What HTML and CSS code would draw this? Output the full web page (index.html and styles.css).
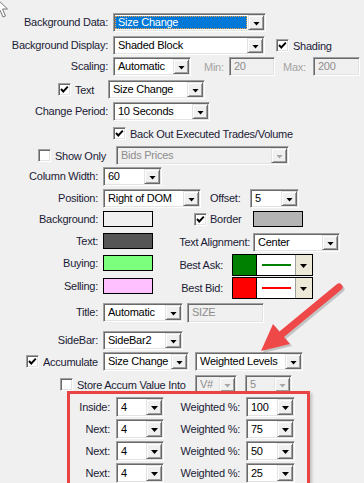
FILE: index.html
```html
<!DOCTYPE html>
<html lang="en">
<head>
  <meta charset="UTF-8" />
  <title>Column Settings</title>
  <link rel="stylesheet" href="styles.css">
</head>
<body>
  <div class="dlg">
    <div class="row">
      <span class="lbl l1">Background Data:</span>
      <div class="combo focus w153"><span class="val">Size Change</span><span class="dd"></span></div>
    </div>
    <div class="row mt4">
      <span class="lbl l1">Background Display:</span>
      <div class="combo w152"><span class="val">Shaded Block</span><span class="dd"></span></div>
      <span class="chk on ml11"><svg viewBox="0 0 11 11"><polyline points="2,5 4.3,7.5 8.8,2.6"/></svg></span>
      <span class="txt ml4">Shading</span>
    </div>
    <div class="row mt2">
      <span class="lbl l1">Scaling:</span>
      <div class="combo w78"><span class="val">Automatic</span><span class="dd"></span></div>
      <span class="gl ml13 w25">Min:</span>
      <div class="tb w46">20</div>
      <span class="gl ml8 w30">Max:</span>
      <div class="tb w47">200</div>
    </div>
    <div class="row mt4">
      <div class="ckl w108 pl58">
        <span class="chk on"><svg viewBox="0 0 11 11"><polyline points="2,5 4.3,7.5 8.8,2.6"/></svg></span>
        <span class="txt ml4">Text</span>
      </div>
      <div class="combo w97"><span class="val">Size Change</span><span class="dd"></span></div>
    </div>
    <div class="row mt3">
      <span class="lbl l1">Change Period:</span>
      <div class="combo w97"><span class="val">10 Seconds</span><span class="dd"></span></div>
    </div>
    <div class="row mt3">
      <div class="ckl pl113">
        <span class="chk on"><svg viewBox="0 0 11 11"><polyline points="2,5 4.3,7.5 8.8,2.6"/></svg></span>
        <span class="txt ml4">Back Out Executed Trades/Volume</span>
      </div>
    </div>
    <div class="row mt3">
      <div class="ckl w116 pl38">
        <span class="chk"></span>
        <span class="txt ml4">Show Only</span>
      </div>
      <div class="combo dis w173"><span class="val">Bids Prices</span><span class="dd"></span></div>
    </div>
    <div class="row mt2">
      <span class="lbl l2">Column Width:</span>
      <div class="combo w59"><span class="val">60</span><span class="dd"></span></div>
    </div>
    <div class="row mt3">
      <span class="lbl l2">Position:</span>
      <div class="combo w98"><span class="val">Right of DOM</span><span class="dd"></span></div>
      <span class="lbl left ml9 w40">Offset:</span>
      <div class="combo w49"><span class="val">5</span><span class="dd"></span></div>
    </div>
    <div class="row h16 mt3">
      <span class="lbl l2">Background:</span>
      <span class="swatch c-bg"></span>
      <span class="chk on ml41"><svg viewBox="0 0 11 11"><polyline points="2,5 4.3,7.5 8.8,2.6"/></svg></span>
      <span class="txt ml3 w43">Border</span>
      <span class="swatch c-border"></span>
    </div>
    <div class="row top h19 mt6">
      <span class="lbl l2 lh16">Text:</span>
      <span class="swatch c-text"></span>
      <span class="lbl w97 mr3">Text Alignment:</span>
      <div class="combo w87"><span class="val">Center</span><span class="dd"></span></div>
    </div>
    <div class="row top h22 mt2">
      <span class="lbl l2 lh16 mt1">Buying:</span>
      <span class="swatch c-buy mt1"></span>
      <span class="lbl w70 mr9 lh22">Best Ask:</span>
      <div class="ccombo"><span class="c c-ask"></span><span class="ln ln-ask"></span><span class="dd2"></span></div>
    </div>
    <div class="row top h22 mt1">
      <span class="lbl l2 lh16 mt1">Selling:</span>
      <span class="swatch c-sell mt1"></span>
      <span class="lbl w70 mr9 lh22">Best Bid:</span>
      <div class="ccombo"><span class="c c-bid"></span><span class="ln ln-bid"></span><span class="dd2"></span></div>
    </div>
    <div class="row mt4">
      <span class="lbl l2">Title:</span>
      <div class="combo w80"><span class="val">Automatic</span><span class="dd"></span></div>
      <div class="tb w77 h20 ml4">SIZE</div>
    </div>
    <div class="row mt9">
      <span class="lbl l2">SideBar:</span>
      <div class="combo w80"><span class="val">SideBar2</span><span class="dd"></span></div>
    </div>
    <div class="row mt2">
      <div class="ckl w103 pl26">
        <span class="chk on"><svg viewBox="0 0 11 11"><polyline points="2,5 4.3,7.5 8.8,2.6"/></svg></span>
        <span class="txt ml4">Accumulate</span>
      </div>
      <div class="combo w86"><span class="val">Size Change</span><span class="dd"></span></div>
      <div class="combo w108 ml6"><span class="val">Weighted Levels</span><span class="dd"></span></div>
    </div>
    <div class="row mt4">
      <div class="ckl w195 pl60">
        <span class="chk"></span>
        <span class="txt ml4">Store Accum Value Into</span>
      </div>
      <div class="combo dis w42"><span class="val">V#</span><span class="dd"></span></div>
      <div class="combo dis w47 ml8"><span class="val">5</span><span class="dd"></span></div>
    </div>
    <div class="row h20 mt3">
      <span class="lbl l3">Inside:</span>
      <div class="combo h20 w48"><span class="val">4</span><span class="dd"></span></div>
      <span class="lbl w76 mr6">Weighted %:</span>
      <div class="combo h20 w49"><span class="val">100</span><span class="dd"></span></div>
    </div>
    <div class="row h20 mt2">
      <span class="lbl l3">Next:</span>
      <div class="combo h20 w48"><span class="val">4</span><span class="dd"></span></div>
      <span class="lbl w76 mr6">Weighted %:</span>
      <div class="combo h20 w49"><span class="val">75</span><span class="dd"></span></div>
    </div>
    <div class="row h20 mt2">
      <span class="lbl l3">Next:</span>
      <div class="combo h20 w48"><span class="val">4</span><span class="dd"></span></div>
      <span class="lbl w76 mr6">Weighted %:</span>
      <div class="combo h20 w49"><span class="val">50</span><span class="dd"></span></div>
    </div>
    <div class="row h20 mt2">
      <span class="lbl l3">Next:</span>
      <div class="combo h20 w48"><span class="val">4</span><span class="dd"></span></div>
      <span class="lbl w76 mr6">Weighted %:</span>
      <div class="combo h20 w49"><span class="val">25</span><span class="dd"></span></div>
    </div>
  </div>

  <!-- annotation drawn over the dialog -->
  <div class="callout"></div>
  <svg class="arrow" viewBox="0 0 364 483">
    <g class="shadow">
      <line x1="341" y1="289" x2="284" y2="336" />
      <polygon points="263,353 275,326 292,346" />
    </g>
    <g class="red">
      <line x1="339" y1="287" x2="282" y2="334" />
      <polygon points="261,351 273,324 290,344" />
    </g>
  </svg>
  <svg class="cursor" viewBox="0 0 20 24">
    <polygon points="-4,-2 -4,14 0,10 3,17 5.5,16 2.5,9 7.5,9" />
  </svg>
</body>
</html>
```

FILE: styles.css
```css
body {
  margin: 0;
  width: 364px;
  height: 483px;
  overflow: hidden;
  position: relative;
  background: #f0f0f0;
  font-family: "Liberation Sans", Arial, sans-serif;
  font-size: 11px;
  letter-spacing: -0.25px;
  color: #000;
}
.dlg {
  padding-top: 13px;
}
.row {
  display: flex;
  align-items: center;
  height: 19px;
}
.row.top {
  align-items: flex-start;
}
.lbl {
  flex: none;
  text-align: right;
  white-space: nowrap;
  color: #1b1b36;
  line-height: 19px;
}
.lbl.left {
  text-align: left;
}
.txt {
  flex: none;
  white-space: nowrap;
  color: #1b1b36;
}
.gl {
  flex: none;
  color: #a3a3a3;
}
.l1 { width: 108px; margin-right: 5px; }
.l2 { width: 98px; margin-right: 5px; }
.l3 { width: 110px; margin-right: 6px; }

/* combo boxes */
.combo {
  flex: none;
  display: flex;
  height: 19px;
  box-sizing: border-box;
  padding: 1px;
  background: #fff;
  border: 1px solid;
  border-color: #a0a0a0 #fff #fff #a0a0a0;
  box-shadow: inset 1px 1px #696969, inset -1px -1px #e3e3e3;
}
.combo .val {
  flex: 1;
  padding-left: 3px;
  overflow: hidden;
  white-space: nowrap;
  line-height: 15px;
}
.combo.h20 .val { line-height: 16px; }
.combo .dd {
  flex: none;
  position: relative;
  width: 16px;
  box-sizing: border-box;
  background: #f0f0f0;
  border: 1px solid;
  border-color: #e3e3e3 #696969 #696969 #e3e3e3;
  box-shadow: inset 1px 1px #fff, inset -1px -1px #a0a0a0;
}
.combo .dd::after {
  content: "";
  position: absolute;
  left: 4px;
  top: 50%;
  margin-top: -1px;
  width: 7px;
  height: 4px;
  background: #000;
  clip-path: polygon(0 0, 100% 0, 50% 100%);
}
.combo.focus .val {
  margin: 1px 1px 1px 0;
  padding-left: 2px;
  line-height: 11px;
  background: #0078d7;
  color: #fff;
  border: 1px dotted #f0a040;
}
.combo.dis {
  background: #f0f0f0;
}
.combo.dis .val {
  color: #8d8d8d;
}
.combo.dis .dd::after {
  background: #a6a6a6;
}

/* text boxes */
.tb {
  flex: none;
  height: 19px;
  box-sizing: border-box;
  padding-left: 4px;
  line-height: 17px;
  color: #8d8d8d;
  background: #f0f0f0;
  border: 1px solid;
  border-color: #a0a0a0 #fff #fff #a0a0a0;
  box-shadow: inset 1px 1px #696969, inset -1px -1px #e3e3e3;
}

/* check boxes */
.chk {
  flex: none;
  width: 13px;
  height: 13px;
  box-sizing: border-box;
  background: #fff;
  border: 1px solid;
  border-color: #a0a0a0 #fff #fff #a0a0a0;
  box-shadow: inset 1px 1px #696969, inset -1px -1px #e3e3e3;
}
.chk svg {
  display: block;
  width: 11px;
  height: 11px;
}
.chk polyline {
  fill: none;
  stroke: #000;
  stroke-width: 1.9;
}
.ckl {
  flex: none;
  display: flex;
  align-items: center;
  box-sizing: border-box;
}

/* colour swatches */
.swatch {
  flex: none;
  width: 50px;
  height: 16px;
  box-sizing: border-box;
  border: 1px solid #000;
}
.c-bg { background: #f0f0f0; }
.c-border { background: #b4b4b4; }
.c-text { background: #555555; }
.c-buy { background: #7cff7c; }
.c-sell { background: #ffc0ff; }

.ccombo {
  flex: none;
  display: flex;
  width: 81px;
  height: 22px;
  box-sizing: border-box;
  border: 1px solid #000;
  background: #fff;
}
.ccombo .c {
  width: 23px;
  border-right: 1px solid #000;
}
.c-ask { background: #008000; }
.c-bid { background: #ff0000; }
.ccombo .ln {
  flex: 1;
  position: relative;
}
.ccombo .ln::after {
  content: "";
  position: absolute;
  left: 5px;
  right: 4px;
  top: 9px;
  height: 2px;
}
.ln-ask::after { background: #008000; }
.ln-bid::after { background: #ff0000; }
.ccombo .dd2 {
  position: relative;
  width: 16px;
  background: #ece9d8;
  border-left: 1px solid #a0a0a0;
}
.ccombo .dd2::after {
  content: "";
  position: absolute;
  left: 4px;
  top: 9px;
  width: 7px;
  height: 4px;
  background: #000;
  clip-path: polygon(0 0, 100% 0, 50% 100%);
}

/* sizes and spacing */
.w25 { width: 25px; }
.w30 { width: 30px; }
.w40 { width: 40px; }
.w42 { width: 42px; }
.w43 { width: 43px; }
.w46 { width: 46px; }
.w47 { width: 47px; }
.w48 { width: 48px; }
.w49 { width: 49px; }
.w59 { width: 59px; }
.w70 { width: 70px; }
.w76 { width: 76px; }
.w77 { width: 77px; }
.w78 { width: 78px; }
.w80 { width: 80px; }
.w86 { width: 86px; }
.w87 { width: 87px; }
.w97 { width: 97px; }
.w98 { width: 98px; }
.w103 { width: 103px; }
.w108 { width: 108px; }
.w116 { width: 116px; }
.w152 { width: 152px; }
.w153 { width: 153px; }
.w173 { width: 173px; }
.w195 { width: 195px; }
.h16 { height: 16px; }
.h19 { height: 19px; }
.h20 { height: 20px; }
.h22 { height: 22px; }
.lh16 { line-height: 16px; }
.lh22 { line-height: 22px; }
.mt1 { margin-top: 1px; }
.mt2 { margin-top: 2px; }
.mt3 { margin-top: 3px; }
.mt4 { margin-top: 4px; }
.mt6 { margin-top: 6px; }
.mt9 { margin-top: 9px; }
.ml3 { margin-left: 3px; }
.ml4 { margin-left: 4px; }
.ml6 { margin-left: 6px; }
.ml8 { margin-left: 8px; }
.ml9 { margin-left: 9px; }
.ml11 { margin-left: 11px; }
.ml13 { margin-left: 13px; }
.ml41 { margin-left: 41px; }
.mr3 { margin-right: 3px; }
.mr6 { margin-right: 6px; }
.mr9 { margin-right: 9px; }
.pl26 { padding-left: 26px; }
.pl38 { padding-left: 38px; }
.pl58 { padding-left: 58px; }
.pl60 { padding-left: 60px; }
.pl113 { padding-left: 113px; }

/* overlays */
.callout {
  position: absolute;
  left: 67px;
  top: 391px;
  width: 243px;
  height: 110px;
  box-sizing: border-box;
  border: 3px solid #ea4343;
  box-shadow: 2px 2px 3px rgba(0, 0, 0, 0.2);
}
.arrow {
  position: absolute;
  left: 0;
  top: 0;
  width: 364px;
  height: 483px;
  pointer-events: none;
}
.arrow line {
  stroke-width: 7;
  stroke-linecap: round;
}
.arrow .red line { stroke: #ee4848; }
.arrow .red polygon { fill: #ee4848; }
.arrow .shadow { opacity: 0.18; }
.arrow .shadow line { stroke: #000; }
.arrow .shadow polygon { fill: #000; }
.cursor {
  position: absolute;
  left: 0;
  top: 0;
  width: 20px;
  height: 24px;
  overflow: visible;
}
.cursor polygon {
  fill: #fff;
  stroke: #777;
  stroke-width: 1;
}
```
